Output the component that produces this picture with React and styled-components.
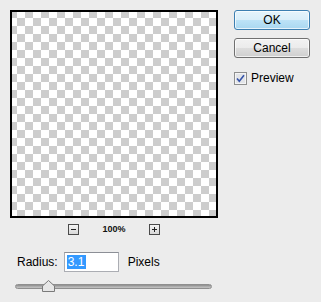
import React from 'react';
import styled, { createGlobalStyle } from 'styled-components';

const Global = createGlobalStyle`
	html, body {
		margin: 0;
		padding: 0;
		background: #ececec;
	}
	body {
		font-family: "Liberation Sans", Arial, sans-serif;
		font-size: 12px;
		color: #000;
	}
`;

const Dialog = styled.div`
	width: 321px;
	height: 302px;
	box-sizing: border-box;
	padding: 10px 0 0 10px;
	background: #ececec;
`;

const Top = styled.div`
	display: flex;
	gap: 16px;
`;

const LeftCol = styled.div`
	display: flex;
	flex-direction: column;
	width: 208px;
`;

const PreviewBox = styled.div`
	width: 208px;
	height: 208px;
	box-sizing: border-box;
	border: 2px solid #000;
	background-color: #fff;
	background-image:
		linear-gradient(45deg, #cdcdcd 25%, transparent 25%, transparent 75%, #cdcdcd 75%),
		linear-gradient(45deg, #cdcdcd 25%, transparent 25%, transparent 75%, #cdcdcd 75%);
	background-size: 16px 16px;
	background-position: 5px -2px, 13px 6px;
`;

const ZoomRow = styled.div`
	display: flex;
	align-items: center;
	justify-content: center;
	gap: 23px;
	height: 22px;
	margin-top: 0;
`;

const ZoomBtn = styled.div`
	width: 11px;
	height: 11px;
	box-sizing: border-box;
	border: 1px solid #4a4a4a;
	background: linear-gradient(#f4f4f4, #d8d8d8);
	display: flex;
	align-items: center;
	justify-content: center;
`;

const ZoomText = styled.span`
	font-size: 9px;
	font-weight: bold;
	color: #111;
`;

const RightCol = styled.div`
	display: flex;
	flex-direction: column;
	gap: 8px;
`;

const Button = styled.div`
	width: 76px;
	height: 20px;
	box-sizing: border-box;
	border-radius: 3px;
	display: flex;
	align-items: center;
	justify-content: center;
	font-size: 12px;
	border: 1px solid ${p => (p.$primary ? '#3c7fb1' : '#707070')};
	background: ${p => (p.$primary
		? 'linear-gradient(#e5f4fc 0%, #d9eef9 50%, #bde3f7 51%, #a9d7f0 100%)'
		: 'linear-gradient(#f2f2f2 0%, #ebebeb 50%, #dddddd 51%, #cfcfcf 100%)')};
	box-shadow: inset 0 0 0 1px rgba(255, 255, 255, 0.7);
`;

const CheckRow = styled.label`
	display: flex;
	align-items: center;
	gap: 4px;
	margin-top: 5px;
	font-size: 12px;
`;

const Bottom = styled.div`
	display: flex;
	flex-direction: column;
	padding-left: 5px;
	margin-top: 12px;
`;

const RadiusRow = styled.div`
	display: flex;
	align-items: center;
	height: 20px;
	padding-left: 2px;
`;

const Label = styled.span`
	margin-right: 6px;
`;

const Input = styled.div`
	width: 55px;
	height: 20px;
	box-sizing: border-box;
	border: 1px solid #abadb3;
	border-top-color: #8c8f96;
	background: #fff;
	padding: 2px 2px;
	display: flex;
	align-items: center;
	margin-right: 9px;
`;

const Selected = styled.span`
	background: #3399ff;
	color: #fff;
	padding: 0 2px 0 1px;
	line-height: 14px;
`;

const Slider = styled.div`
	position: relative;
	width: 197px;
	height: 20px;
	margin-top: 0;
`;

const Track = styled.div`
	position: absolute;
	left: 0;
	right: 0;
	top: 12px;
	height: 5px;
	border-radius: 3px;
	background: linear-gradient(#8a8a8a, #a9a9a9 40%, #c4c4c4);
	border: 1px solid #8f8f8f;
	box-sizing: border-box;
`;

const Thumb = styled.svg`
	position: absolute;
	top: 8px;
	left: 27px;
`;

export default function App() {
	return (
		<Dialog>
			<Global />
			<Top>
				<LeftCol>
					<PreviewBox />
					<ZoomRow>
						<ZoomBtn>
							<svg width="9" height="9" viewBox="0 0 9 9">
								<rect x="2" y="4" width="5" height="1" fill="#222" />
							</svg>
						</ZoomBtn>
						<ZoomText>100%</ZoomText>
						<ZoomBtn>
							<svg width="9" height="9" viewBox="0 0 9 9">
								<rect x="2" y="4" width="5" height="1" fill="#222" />
								<rect x="4" y="2" width="1" height="5" fill="#222" />
							</svg>
						</ZoomBtn>
					</ZoomRow>
				</LeftCol>
				<RightCol>
					<Button $primary>OK</Button>
					<Button>Cancel</Button>
					<CheckRow>
						<svg width="13" height="13" viewBox="0 0 13 13">
							<rect x="0.5" y="0.5" width="12" height="12" fill="#f4f4f4" stroke="#8e8f8f" />
							<rect x="2" y="2" width="9" height="9" fill="#e2e4e8" />
							<path d="M3 6.5 L5.3 9.3 L10 3.2" fill="none" stroke="#3553a8" strokeWidth="1.6" />
						</svg>
						Preview
					</CheckRow>
				</RightCol>
			</Top>
			<Bottom>
				<RadiusRow>
					<Label>Radius:</Label>
					<Input><Selected>3.1</Selected></Input>
					<span>Pixels</span>
				</RadiusRow>
				<Slider>
					<Track />
					<Thumb width="13" height="12" viewBox="0 0 13 12">
						<path d="M0.5 11.5 L0.5 6 L6.5 0.5 L12.5 6 L12.5 11.5 Z" fill="#e6e6e6" stroke="#7a7a7a" />
					</Thumb>
				</Slider>
			</Bottom>
		</Dialog>
	);
}
